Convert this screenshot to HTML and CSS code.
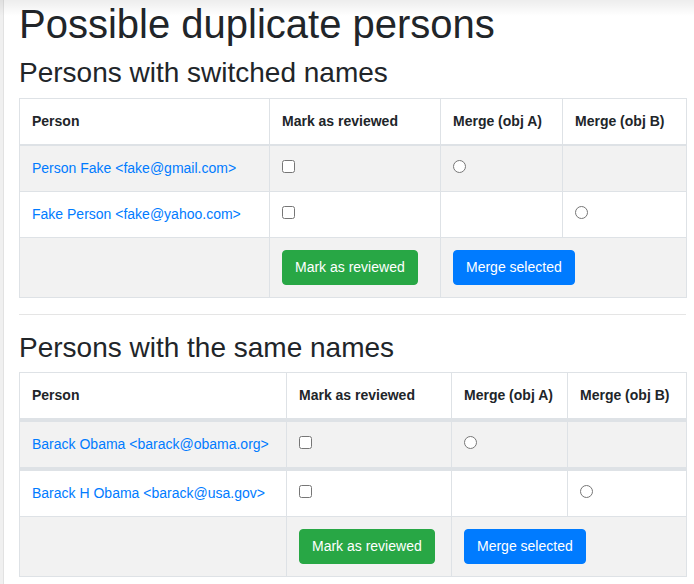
FILE: index.html
```html
<!DOCTYPE html>
<html>
<head>
<meta charset="utf-8">
<title>Possible duplicate persons</title>
<link rel="stylesheet" href="styles.css">
</head>
<body>
<div class="shade"></div>
<div class="layout">
  <div class="edge"></div>
  <main class="content">
    <h1 class="title">Possible duplicate persons</h1>
    <h3 class="section">Persons with switched names</h3>
    <table class="table striped">
      <colgroup>
        <col class="t1-c1"><col class="t1-c2"><col class="t1-c3"><col class="t1-c4">
      </colgroup>
      <thead>
        <tr><th>Person</th><th>Mark as reviewed</th><th>Merge (obj A)</th><th>Merge (obj B)</th></tr>
      </thead>
      <tbody>
        <tr class="odd">
          <td><a href="#">Person Fake &lt;fake@gmail.com&gt;</a></td>
          <td><input type="checkbox" class="ctl"></td>
          <td><input type="radio" name="a1" class="ctl"></td>
          <td></td>
        </tr>
        <tr>
          <td><a href="#">Fake Person &lt;fake@yahoo.com&gt;</a></td>
          <td><input type="checkbox" class="ctl"></td>
          <td></td>
          <td><input type="radio" name="b1" class="ctl"></td>
        </tr>
        <tr class="odd">
          <td></td>
          <td><button class="btn btn-green">Mark as reviewed</button></td>
          <td colspan="2"><button class="btn btn-blue">Merge selected</button></td>
        </tr>
      </tbody>
    </table>
    <hr class="divider">
    <h3 class="section">Persons with the same names</h3>
    <table class="table">
      <colgroup>
        <col class="t2-c1"><col class="t2-c2"><col class="t2-c3"><col class="t2-c4">
      </colgroup>
      <thead>
        <tr><th>Person</th><th>Mark as reviewed</th><th>Merge (obj A)</th><th>Merge (obj B)</th></tr>
      </thead>
      <tbody>
        <tr class="odd thick">
          <td><a href="#">Barack Obama &lt;barack@obama.org&gt;</a></td>
          <td><input type="checkbox" class="ctl"></td>
          <td><input type="radio" name="a2" class="ctl"></td>
          <td></td>
        </tr>
        <tr class="thick">
          <td><a href="#">Barack H Obama &lt;barack@usa.gov&gt;</a></td>
          <td><input type="checkbox" class="ctl"></td>
          <td></td>
          <td><input type="radio" name="b2" class="ctl"></td>
        </tr>
        <tr class="odd">
          <td></td>
          <td><button class="btn btn-green">Mark as reviewed</button></td>
          <td colspan="2"><button class="btn btn-blue">Merge selected</button></td>
        </tr>
      </tbody>
    </table>
  </main>
</div>
</body>
</html>
```
FILE: styles.css
```css
html, body {
  margin: 0;
  padding: 0;
  background: #fff;
}
body {
  font-family: "Liberation Sans", Arial, sans-serif;
  color: #212529;
  position: relative;
  min-height: 584px;
}
.shade {
  position: absolute;
  left: 0;
  top: 0;
  right: 0;
  height: 16px;
  background: linear-gradient(rgba(0,0,0,0.07), rgba(0,0,0,0));
  pointer-events: none;
}
.layout {
  display: flex;
  min-height: 584px;
}
.edge {
  width: 3px;
  flex: none;
  background: #f0f0f0;
  border-right: 1px solid #e2e2e2;
}
.content {
  flex: 1;
  min-width: 0;
  padding: 0 8px 0 15px;
}
.title {
  margin: 0 0 8px;
  font-size: 40px;
  line-height: 48px;
  font-weight: 500;
}
.section {
  margin: 0 0 8px;
  font-size: 28px;
  line-height: 33.6px;
  font-weight: 500;
}
.divider {
  margin: 16px 0;
  border: 0;
  border-top: 1px solid #e5e5e5;
  height: 0;
}
.table {
  width: 100%;
  table-layout: fixed;
  border-collapse: collapse;
  border: 1px solid #dee2e6;
  font-size: 14px;
  line-height: 1.5;
  margin-bottom: 16px;
}
.t1-c1 { width: 250px; }
.t1-c2 { width: 171px; }
.t1-c3 { width: 122px; }
.t1-c4 { width: 124px; }
.t2-c1 { width: 267px; }
.t2-c2 { width: 165px; }
.t2-c3 { width: 116px; }
.t2-c4 { width: 119px; }
.table th,
.table td {
  padding: 12px;
  border: 1px solid #dee2e6;
  vertical-align: top;
  text-align: left;
}
.table th {
  font-weight: bold;
  vertical-align: bottom;
  border-bottom: 2px solid #dee2e6;
}
.table .odd td {
  background: #f2f2f2;
}
.table .thick td {
  border-top: 4px solid #dee2e6;
}
.table a {
  color: #007bff;
  text-decoration: none;
}
.ctl {
  display: block;
  margin: 2px 0 0;
  width: 13px;
  height: 13px;
}
.btn {
  font-family: inherit;
  font-size: 14px;
  line-height: 1.5;
  padding: 6px 12px;
  border: 1px solid transparent;
  border-radius: 4px;
  color: #fff;
  cursor: pointer;
}
.btn-green {
  background: #28a745;
  border-color: #28a745;
}
.btn-blue {
  background: #007bff;
  border-color: #007bff;
}
```
